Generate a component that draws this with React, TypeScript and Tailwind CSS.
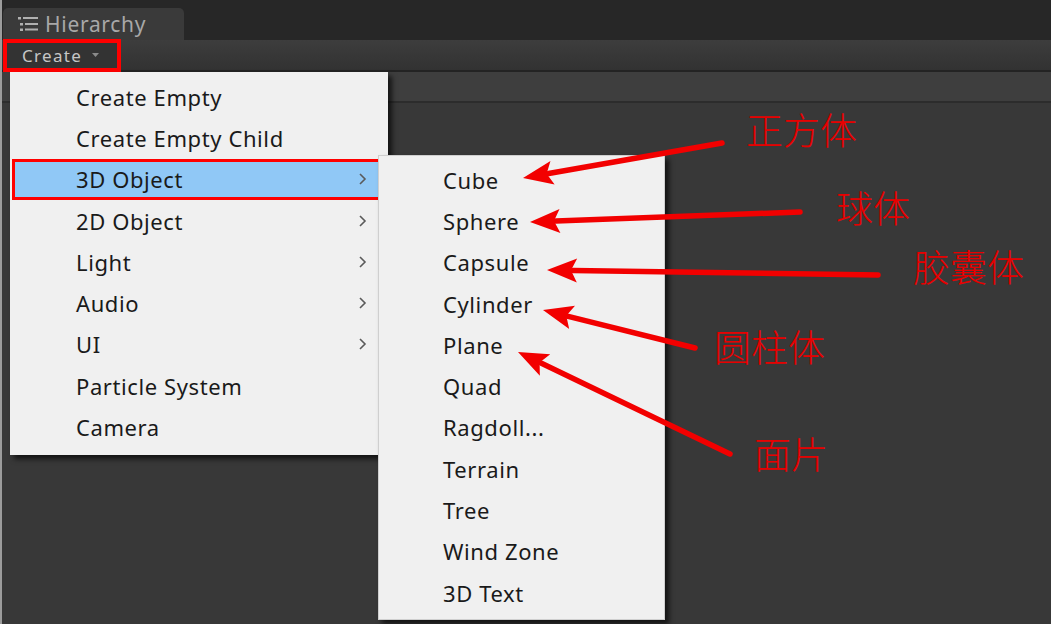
import React from "react";

const mainItems: { label: string; sub?: boolean; active?: boolean }[] = [
  { label: "Create Empty" },
  { label: "Create Empty Child" },
  { label: "3D Object", sub: true, active: true },
  { label: "2D Object", sub: true },
  { label: "Light", sub: true },
  { label: "Audio", sub: true },
  { label: "UI", sub: true },
  { label: "Particle System" },
  { label: "Camera" },
];

const subItems = [
  "Cube",
  "Sphere",
  "Capsule",
  "Cylinder",
  "Plane",
  "Quad",
  "Ragdoll...",
  "Terrain",
  "Tree",
  "Wind Zone",
  "3D Text",
];

const arrows: [number, number, number, number][] = [
  [722, 143, 523, 178],
  [800, 212, 530, 222],
  [878, 275, 547, 270],
  [695, 348, 543, 310],
  [730, 454, 518, 352],
];

const labels: { text: string; x: number; y: number }[] = [
  { text: "正方体", x: 746, y: 111 },
  { text: "球体", x: 836, y: 189 },
  { text: "胶囊体", x: 913, y: 248 },
  { text: "圆柱体", x: 714, y: 328 },
  { text: "面片", x: 754, y: 435 },
];

function Chevron() {
  return (
    <svg width="10" height="14" viewBox="0 0 10 14" className="shrink-0">
      <polyline points="2,2 7,7 2,12" fill="none" stroke="#5a5a5a" strokeWidth="1.6" />
    </svg>
  );
}

function Arrow({ x1, y1, x2, y2 }: { x1: number; y1: number; x2: number; y2: number }) {
  const dx = x2 - x1;
  const dy = y2 - y1;
  const len = Math.sqrt(dx * dx + dy * dy);
  const ux = dx / len;
  const uy = dy / len;
  const hl = 30;
  const hw = 12;
  const bx = x2 - ux * hl;
  const by = y2 - uy * hl;
  const px = -uy;
  const py = ux;
  const pts = `${x2},${y2} ${bx + px * hw},${by + py * hw} ${bx + ux * 6},${by + uy * 6} ${bx - px * hw},${by - py * hw}`;
  return (
    <g>
      <line x1={x1} y1={y1} x2={bx + ux * 4} y2={by + uy * 4} stroke="#f20000" strokeWidth="5.5" strokeLinecap="round" />
      <polygon points={pts} fill="#f20000" />
    </g>
  );
}

export default function App() {
  return (
    <div
      className="relative w-[1051px] h-[624px] overflow-hidden bg-[#383838] border-l-2 border-[#9c9c9c] flex flex-col"
      style={{ fontFamily: '"Noto Sans", "DejaVu Sans", sans-serif' }}
    >
      {/* Tab bar */}
      <div className="h-[40px] bg-[#272727] flex items-end pl-[1px] shrink-0">
        <div className="h-[32px] w-[181px] bg-[#3a3a3a] rounded-t-[5px] flex items-center pl-[14px] gap-[6px]">
          <svg width="22" height="16" viewBox="0 0 22 16">
            <rect x="1" y="1" width="3" height="2.5" fill="#b0b0b0" />
            <rect x="6" y="1" width="15" height="2" fill="#b0b0b0" />
            <rect x="3" y="7" width="3" height="2.5" fill="#b0b0b0" />
            <rect x="8" y="7" width="13" height="2" fill="#b0b0b0" />
            <rect x="3" y="12.5" width="3" height="2.5" fill="#b0b0b0" />
            <rect x="8" y="12.5" width="13" height="2" fill="#b0b0b0" />
          </svg>
          <span className="text-[21px] leading-none text-[#a8a8a8] tracking-[0.7px]">Hierarchy</span>
        </div>
      </div>
      {/* Toolbar */}
      <div className="h-[32px] bg-gradient-to-b from-[#3d3d3d] to-[#323232] border-b-2 border-[#232323] flex items-center shrink-0 pl-[1px]">
        <div className="h-[33px] w-[118px] border-[4px] border-[#ff0000] bg-[#333333] flex items-center pl-[15px] gap-[10px]">
          <span className="text-[17px] leading-none text-[#c6c6c6] tracking-[1.3px]">Create</span>
          <svg width="8" height="6" viewBox="0 0 8 6">
            <polygon points="0,1 7,1 3.5,5" fill="#8a8a8a" />
          </svg>
        </div>
      </div>
      {/* Search row */}
      <div className="h-[31px] bg-[#3e3e3e] border-b-2 border-[#2c2c2c] shrink-0" />
      <div className="flex-1 bg-[#383838]" />

      {/* Main dropdown menu */}
      <div className="absolute left-[8px] top-[72px] w-[378px] h-[383px] bg-[#f0f0f0] pt-[4px] shadow-[4px_4px_5px_rgba(0,0,0,0.65)] flex flex-col">
        {mainItems.map((it) => (
          <div
            key={it.label}
            className={
              it.active
                ? "h-[41.3px] mx-[2px] bg-[#90c8f6] border-[3px] border-[#ff0000] flex items-center pl-[61px] pr-[15px] justify-between"
                : "h-[41.3px] mx-[2px] flex items-center pl-[64px] pr-[18px] justify-between"
            }
          >
            <span className="text-[22px] leading-none text-[#1a1a1a] tracking-[0.6px]">{it.label}</span>
            {it.sub ? <Chevron /> : null}
          </div>
        ))}
      </div>

      {/* Submenu */}
      <div className="absolute left-[376px] top-[155px] w-[287px] h-[465px] bg-[#f0f0f0] border border-[#cfcfcf] pt-[3px] shadow-[4px_4px_5px_rgba(0,0,0,0.65)] flex flex-col">
        {subItems.map((s) => (
          <div key={s} className="h-[41.3px] flex items-center pl-[64px]">
            <span className="text-[22px] leading-none text-[#1a1a1a] tracking-[0.6px]">{s}</span>
          </div>
        ))}
      </div>

      {/* Annotation arrows */}
      <svg className="absolute left-0 top-0 pointer-events-none" width="1051" height="624" viewBox="0 0 1051 624">
        {arrows.map(([a, b, c, d], i) => (
          <Arrow key={i} x1={a - 2} y1={b} x2={c - 2} y2={d} />
        ))}
      </svg>

      {labels.map((l) => (
        <div
          key={l.text}
          className="absolute text-[37px] leading-none text-[#e80000] font-light"
          style={{ left: l.x - 2, top: l.y, fontFamily: '"Noto Sans CJK SC", sans-serif' }}
        >
          {l.text}
        </div>
      ))}
    </div>
  );
}
